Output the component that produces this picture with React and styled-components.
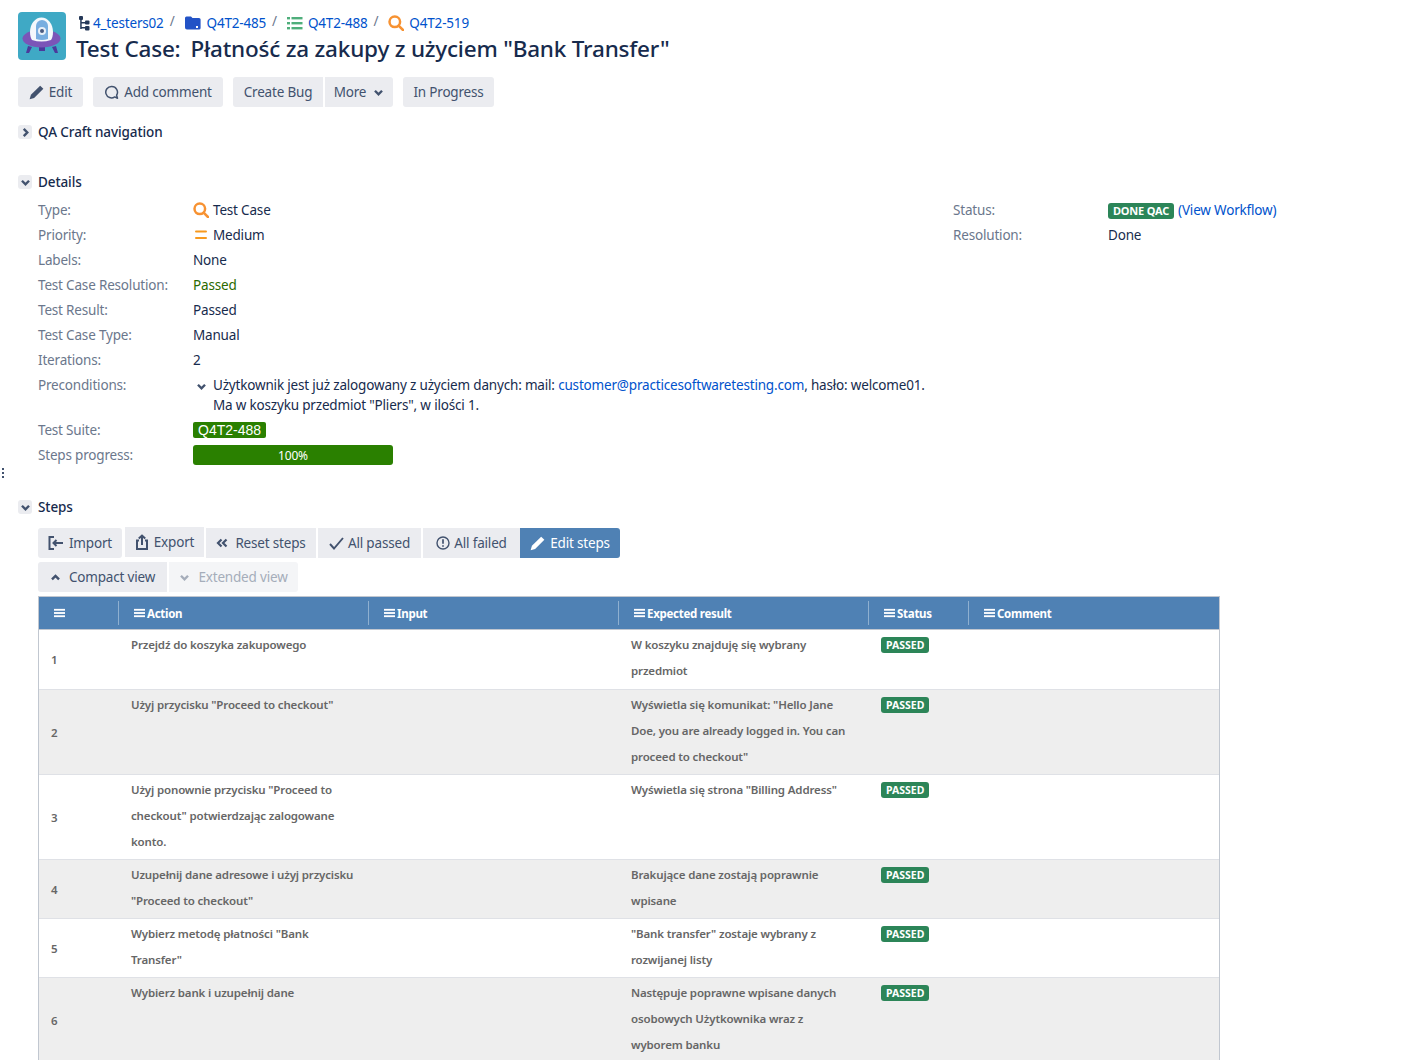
import React from "react";
import styled, { createGlobalStyle } from "styled-components";

const Global = createGlobalStyle`
  html, body { margin: 0; padding: 0; background: #fff; overflow: hidden; height: 1060px; }
  body { font-family: "Noto Sans", "Open Sans", sans-serif; font-size: 13.5px; color: #172b4d; letter-spacing: -0.18px; }
  #root { height: 1060px; overflow: hidden; }
`;

const Page = styled.div`
  position: relative;
  padding: 12px 0 0 18px;
  width: 1405px;
`;
const Header = styled.header`
  display: flex;
  gap: 10px;
  height: 48px;
`;
const Logo = styled.svg`
  width: 48px;
  height: 48px;
  flex: none;
  border-radius: 4px;
`;
const HeadText = styled.div`
  display: flex;
  flex-direction: column;
  padding-top: 1px;
`;
const Crumbs = styled.nav`
  display: flex;
  align-items: center;
  height: 20px;
  margin: 1px 0 0 3px;
`;
const Crumb = styled.a`
  display: inline-flex;
  align-items: center;
  gap: ${(p) => p.$gap ?? 4}px;
  color: #0052cc;
`;
const Slash = styled.span`
  color: #6b778c;
  margin: -4px 10px 0 6px;
`;
const Title = styled.h1`
  margin: 2px 0 0;
  font-size: 22.5px;
  line-height: 30px;
  font-weight: 500;
  letter-spacing: -0.2px;
  color: #172b4d;
  white-space: nowrap;
  & > span { margin-left: 10px; }
`;
const Toolbar = styled.div`
  display: flex;
  margin-top: 17px;
  height: 30px;
`;
const Btn = styled.button`
  height: 30px;
  width: ${(p) => p.$w}px;
  margin-left: ${(p) => p.$ml ?? 0}px;
  margin-top: ${(p) => p.$mt ?? 0}px;
  padding: 0;
  border: 0;
  border-radius: ${(p) => p.$radius ?? "3px"};
  background: ${(p) => (p.$primary ? "#4f81b4" : p.$faded ? "#f4f5f7" : "#ebecf0")};
  color: ${(p) => (p.$primary ? "#fff" : p.$faded ? "#a5adba" : "#42526e")};
  font: inherit;
  letter-spacing: inherit;
  display: inline-flex;
  align-items: center;
  justify-content: center;
  gap: ${(p) => p.$gap ?? 5}px;
  flex: none;
`;
const ModuleHead = styled.div`
  display: flex;
  align-items: center;
  gap: 6px;
  height: 20px;
  margin-top: ${(p) => p.$mt}px;
  font-weight: 500;
  letter-spacing: -0.1px;
  color: #172b4d;
`;
const Toggle = styled.span`
  width: 14px;
  height: 14px;
  border-radius: 3px;
  background: #ebecf0;
  display: inline-flex;
  align-items: center;
  justify-content: center;
`;
const DetailsWrap = styled.div`
  display: flex;
  margin: 5px 0 0 20px;
`;
const FieldCol = styled.dl`
  margin: 0;
  width: ${(p) => p.$w}px;
  flex: none;
`;
const Field = styled.div`
  display: grid;
  grid-template-columns: 155px 1fr;
  padding: 2.5px 0;
  line-height: 20px;
`;
const Label = styled.dt`
  color: #6b778c;
`;
const Value = styled.dd`
  margin: 0;
  display: flex;
  align-items: ${(p) => (p.$top ? "flex-start" : "center")};
  gap: ${(p) => p.$gap ?? 4}px;
  color: ${(p) => p.$color ?? "#172b4d"};
  white-space: nowrap;
`;
const IconSlot = styled.span`
  width: 16px;
  flex: none;
  display: inline-flex;
  justify-content: center;
  padding-top: ${(p) => p.$pt ?? 0}px;
`;
const Link = styled.a`
  color: #0052cc;
`;
const SuiteTag = styled.span`
  background: #2a8000;
  color: #fff;
  border-radius: 2px;
  font-family: "Liberation Sans", sans-serif;
  font-size: 14px;
  letter-spacing: 0;
  line-height: 16px;
  padding: 0 5px;
  margin-top: 1px;
`;
const Progress = styled.div`
  width: 200px;
  height: 20px;
  border-radius: 3px;
  background: #2a8000;
  color: #fff;
  font-size: 12px;
  line-height: 21px;
  text-align: center;
`;
const Lozenge = styled.span`
  background: #2c8558;
  color: #fff;
  border-radius: 3px;
  font-size: 11px;
  font-weight: 700;
  line-height: 16px;
  height: 16px;
  padding: 0 5px;
  letter-spacing: -0.2px;
  display: inline-block;
  margin-top: 2px;
`;
const Handle = styled.span`
  position: absolute;
  left: 2px;
  top: 468px;
  width: 2px;
  height: 12px;
  background: repeating-linear-gradient(#42526e 0 2px, transparent 2px 4px);
`;
const StepsBody = styled.div`
  margin: 11px 0 0 20px;
  width: 1182px;
`;
const BtnRow = styled.div`
  display: flex;
  height: 30px;
  margin-bottom: 4px;
`;
const Table = styled.div`
  margin-top: 4px;
  border: 1px solid #c1c7d0;
  border-top: 0;
  width: 1182px;
  box-sizing: border-box;
  font-size: 11.5px;
  font-weight: 600;
  letter-spacing: -0.15px;
  color: #666;
`;
const Grid = styled.div`
  display: grid;
  grid-template-columns: 80px 250px 250px 250px 100px 250px;
`;
const HeadRow = styled(Grid)`
  background: #4f81b4;
  color: #fff;
  height: 34px;
  margin: 0 -1px 0;
  border: 1px solid #c1c7d0;
  box-sizing: border-box;
  align-items: center;
  font-weight: 700;
  letter-spacing: -0.28px;
  overflow: hidden;
`;
const HeadCell = styled.div`
  display: flex;
  align-items: center;
  gap: 2px;
  height: 24px;
  padding-left: 15px;
  box-sizing: border-box;
  border-right: 1px solid #8fb0d0;
  &:last-child { border-right: 0; }
`;
const Row = styled(Grid)`
  background: ${(p) => (p.$alt ? "#eee" : "#fff")};
  min-height: ${(p) => p.$h}px;
  border-bottom: 1px solid #dfe1e6;
`;
const Cell = styled.div`
  padding: 2px 0 3px 12px;
  line-height: 26px;
  white-space: nowrap;
`;
const NumCell = styled(Cell)`
  display: flex;
  align-items: center;
  padding-top: 4px;
`;
const StatusTag = styled(Lozenge)`
  font-size: 10.5px;
  letter-spacing: 0;
  margin-top: 0;
`;

const Bars = ({ color = "#fff" }) => (
  <svg width={11} height={10} viewBox="0 0 12 10" fill={color}>
    <rect x="0" y="0.5" width="12" height="2" />
    <rect x="0" y="4" width="12" height="2" />
    <rect x="0" y="7.5" width="12" height="2" />
  </svg>
);
const Chevron = ({ up, color = "#42526e", size = 11 }) => (
  <svg width={size} height={size} viewBox="0 0 10 10" fill="none" stroke={color} strokeWidth="2.2">
    <path d={up ? "M1.8 6.8 5 3.6l3.2 3.2" : "M1.8 3.4 5 6.6l3.2-3.2"} />
  </svg>
);
const ChevronRight = () => (
  <svg width="11" height="11" viewBox="0 0 10 10" fill="none" stroke="#42526e" strokeWidth="2.2">
    <path d="M3.4 1.8 6.6 5 3.4 8.2" />
  </svg>
);
const Pencil = ({ color = "#42526e" }) => (
  <svg width="15" height="15" viewBox="0 0 14 14" fill={color}>
    <path d="M10.4.6 13.4 3.6 4.8 12.2.6 13.4 1.8 9.2Z" />
  </svg>
);
const Search = ({ size = 16 }) => (
  <svg width={size} height={size} viewBox="0 0 16 16" fill="none" stroke="#f79232" strokeWidth="2.5">
    <circle cx="6.8" cy="6.8" r="5.3" />
    <path d="M10.6 10.6 15 15" strokeLinecap="round" />
  </svg>
);
const Medium = () => (
  <svg width="14" height="10" viewBox="0 0 14 10" fill="#f79a1f">
    <rect x="1" y="0.5" width="12" height="2" rx="1" />
    <rect x="1" y="7" width="12" height="2" rx="1" />
  </svg>
);
const TreeIcon = () => (
  <svg width="11" height="15" viewBox="0 0 11 15" fill="#253858">
    <rect x="0" y="0" width="4" height="4" rx="1" />
    <rect x="1.2" y="3" width="1.5" height="10" />
    <rect x="2" y="6" width="5" height="1.5" />
    <rect x="2" y="11" width="5" height="1.5" />
    <rect x="6" y="4.5" width="4.500" height="4" rx="1" />
    <rect x="6" y="10" width="4.500" height="4.500" rx="1" />
  </svg>
);
const Folder = () => (
  <svg width="16" height="14" viewBox="0 0 16 14" fill="#2353c6">
    <path d="M0 2q0-1.5 1.5-1.5H6L7.5 2H14q1.6 0 1.6 1.5V12q0 1.6-1.6 1.6H2q-2 0-2-2Z" />
    <rect x="11" y="10" width="2" height="2" fill="#fff" />
  </svg>
);
const ListIcon = () => (
  <svg width="16" height="14" viewBox="0 0 16 14" fill="#4fae7b">
    <rect x="0" y="1" width="3" height="2.4" /><rect x="4.5" y="1" width="11" height="2.4" />
    <rect x="0" y="6" width="3" height="2.4" /><rect x="4.5" y="6" width="11" height="2.4" />
    <rect x="0" y="11" width="3" height="2.4" /><rect x="4.5" y="11" width="11" height="2.4" />
  </svg>
);
const Comment = () => (
  <svg width="15" height="15" viewBox="0 0 15 15" fill="none" stroke="#42526e" strokeWidth="1.5">
    <path d="M7.5 1.5a5.7 5.7 0 1 0 3.2 10.4l2.8 1.3-.9-3A5.7 5.7 0 0 0 7.5 1.5Z" strokeLinejoin="round" />
  </svg>
);
const ImportIcon = () => (
  <svg width="16" height="14" viewBox="0 0 16 14" fill="none" stroke="#42526e" strokeWidth="2">
    <path d="M6 1H1.500v12H6" />
    <path d="M15 7H5.500M8.500 4l-3 3 3 3" />
  </svg>
);
const ExportIcon = () => (
  <svg width="14" height="16" viewBox="0 0 14 16" fill="none" stroke="#42526e" strokeWidth="2">
    <path d="M4 6.500H2V15h10V6.500h-2" />
    <path d="M7 11V1.500M3.800 4.500 7 1.500l3.200 3" />
  </svg>
);
const DoubleLeft = () => (
  <svg width="12" height="10" viewBox="0 0 12 10" fill="none" stroke="#42526e" strokeWidth="2.2">
    <path d="M5.500 1.500 2 5l3.500 3.500M10.500 1.500 7 5l3.500 3.500" />
  </svg>
);
const Check = () => (
  <svg width="15" height="13" viewBox="0 0 15 13" fill="none" stroke="#42526e" strokeWidth="1.9">
    <path d="M1 7l4 4.500L14 1" />
  </svg>
);
const Alert = () => (
  <svg width="14" height="14" viewBox="0 0 14 14" fill="none" stroke="#42526e" strokeWidth="1.4">
    <circle cx="7" cy="7" r="6" />
    <path d="M7 3.200v4.600M7 9.200v1.600" strokeWidth="1.7" />
  </svg>
);

const steps = [
  { n: 1, h: 59, action: ["Przejdź do koszyka zakupowego"], expected: ["W koszyku znajduję się wybrany", "przedmiot"] },
  { n: 2, h: 84, action: ['Użyj przycisku "Proceed to checkout"'], expected: ['Wyświetla się komunikat: "Hello Jane', "Doe, you are already logged in. You can", 'proceed to checkout"'] },
  { n: 3, h: 84, action: ['Użyj ponownie przycisku "Proceed to', 'checkout" potwierdzając zalogowane', "konto."], expected: ['Wyświetla się strona "Billing Address"'] },
  { n: 4, h: 58, action: ["Uzupełnij dane adresowe i użyj przycisku", '"Proceed to checkout"'], expected: ["Brakujące dane zostają poprawnie", "wpisane"] },
  { n: 5, h: 58, action: ['Wybierz metodę płatności "Bank', 'Transfer"'], expected: ['"Bank transfer" zostaje wybrany z', "rozwijanej listy"] },
  { n: 6, h: 84, action: ["Wybierz bank i uzupełnij dane"], expected: ["Następuje poprawne wpisane danych", "osobowych Użytkownika wraz z", "wyborem banku"] },
];

const Lines = ({ items }) => items.map((t, i) => <div key={i}>{t}</div>);

export default function App() {
  return (
    <Page>
      <Global />
      <Handle />
      <Header>
        <Logo viewBox="0 0 48 48">
          <rect width="48" height="48" fill="#3fa9c5" />
          <path d="M10 34l-2 7h3l3-6zM38 34l2 7h-3l-3-6z" fill="#4b3a9c" />
          <rect x="21" y="34" width="6" height="5" fill="#4b3a9c" />
          <ellipse cx="23.500" cy="26.500" rx="19" ry="9" fill="#7b55b8" />
          <path d="M12 20a11.500 14.500 0 0 1 23 0c0 4-1 6.500-2 8q-9.500 3-19 0c-1-1.500-2-4-2-8Z" fill="#f4f8fc" />
          <path d="M18 27V14a6 6 0 0 1 12 0v13q-6 2-12 0Z" fill="#78aee0" />
          <circle cx="24" cy="19" r="4" fill="#e8f0f8" />
          <circle cx="24" cy="19" r="2" fill="#4a5a80" />
        </Logo>
        <HeadText>
          <Crumbs>
            <Crumb $gap={3}><TreeIcon />4_testers02</Crumb>
            <Slash>/</Slash>
            <Crumb $gap={6}><Folder />Q4T2-485</Crumb>
            <Slash>/</Slash>
            <Crumb $gap={5}><ListIcon />Q4T2-488</Crumb>
            <Slash>/</Slash>
            <Crumb $gap={5}><Search />Q4T2-519</Crumb>
          </Crumbs>
          <Title>Test Case:<span>Płatność za zakupy z użyciem "Bank Transfer"</span></Title>
        </HeadText>
      </Header>

      <Toolbar>
        <Btn $w={65}><Pencil />Edit</Btn>
        <Btn $w={130} $ml={10} $gap={5}><Comment />Add comment</Btn>
        <Btn $w={90} $ml={10} $radius="3px 0 0 3px">Create Bug</Btn>
        <Btn $w={68} $ml={2} $radius="0 3px 3px 0" $gap={7}>More<Chevron /></Btn>
        <Btn $w={91} $ml={10}>In Progress</Btn>
      </Toolbar>

      <ModuleHead $mt={15}><Toggle><ChevronRight /></Toggle>QA Craft navigation</ModuleHead>
      <ModuleHead $mt={30}><Toggle><Chevron /></Toggle>Details</ModuleHead>

      <DetailsWrap>
        <FieldCol $w={915}>
          <Field><Label>Type:</Label><Value><IconSlot><Search /></IconSlot>Test Case</Value></Field>
          <Field><Label>Priority:</Label><Value><IconSlot><Medium /></IconSlot>Medium</Value></Field>
          <Field><Label>Labels:</Label><Value>None</Value></Field>
          <Field><Label>Test Case Resolution:</Label><Value $color="#2a6a00">Passed</Value></Field>
          <Field><Label>Test Result:</Label><Value>Passed</Value></Field>
          <Field><Label>Test Case Type:</Label><Value>Manual</Value></Field>
          <Field><Label>Iterations:</Label><Value>2</Value></Field>
          <Field>
            <Label>Preconditions:</Label>
            <Value $top>
              <IconSlot $pt={6}><Chevron /></IconSlot>
              <div>
                <div>Użytkownik jest już zalogowany z użyciem danych: mail: <Link>customer@practicesoftwaretesting.com</Link>, hasło: welcome01.</div>
                <div>Ma w koszyku przedmiot "Pliers", w ilości 1.</div>
              </div>
            </Value>
          </Field>
          <Field><Label>Test Suite:</Label><Value><SuiteTag>Q4T2-488</SuiteTag></Value></Field>
          <Field><Label>Steps progress:</Label><Value><Progress>100%</Progress></Value></Field>
        </FieldCol>
        <FieldCol $w={330}>
          <Field><Label>Status:</Label><Value><Lozenge>DONE QAC</Lozenge><Link>(View Workflow)</Link></Value></Field>
          <Field><Label>Resolution:</Label><Value>Done</Value></Field>
        </FieldCol>
      </DetailsWrap>

      <ModuleHead $mt={30}><Toggle><Chevron /></Toggle>Steps</ModuleHead>

      <StepsBody>
        <BtnRow>
          <Btn $w={84}><ImportIcon />Import</Btn>
          <Btn $w={79} $ml={3} $mt={-1} $radius="0"><ExportIcon />Export</Btn>
          <Btn $w={110} $ml={2} $radius="0" $gap={7}><DoubleLeft />Reset steps</Btn>
          <Btn $w={103} $ml={2} $radius="0" $gap={4}><Check />All passed</Btn>
          <Btn $w={97} $ml={2} $radius="0" $gap={4}><Alert />All failed</Btn>
          <Btn $w={100} $primary $radius="0 3px 3px 0"><Pencil color="#fff" />Edit steps</Btn>
        </BtnRow>
        <BtnRow>
          <Btn $w={129} $radius="3px 0 0 3px" $gap={8}><Chevron up />Compact view</Btn>
          <Btn $w={129} $ml={2} $faded $radius="0 3px 3px 0" $gap={8}><Chevron color="#a5adba" />Extended view</Btn>
        </BtnRow>
        <Table>
          <HeadRow>
            <HeadCell><Bars /></HeadCell>
            <HeadCell><Bars />Action</HeadCell>
            <HeadCell><Bars />Input</HeadCell>
            <HeadCell><Bars />Expected result</HeadCell>
            <HeadCell><Bars />Status</HeadCell>
            <HeadCell><Bars />Comment</HeadCell>
          </HeadRow>
          {steps.map((s, i) => (
            <Row key={s.n} $alt={i % 2 === 1} $h={s.h}>
              <NumCell>{s.n}</NumCell>
              <Cell><Lines items={s.action} /></Cell>
              <Cell />
              <Cell><Lines items={s.expected} /></Cell>
              <Cell><StatusTag>PASSED</StatusTag></Cell>
              <Cell />
            </Row>
          ))}
        </Table>
      </StepsBody>
    </Page>
  );
}
